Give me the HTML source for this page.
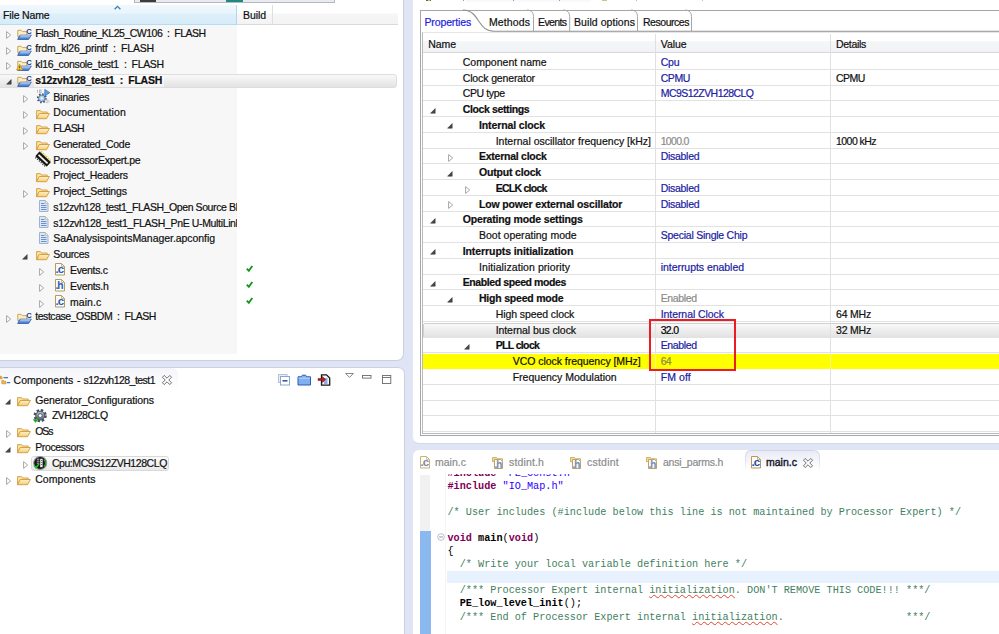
<!DOCTYPE html>
<html><head><meta charset="utf-8"><title>IDE</title>
<style>
html,body{margin:0;padding:0}
body{width:999px;height:634px;overflow:hidden;background:#e0e5f5;position:relative;font-family:"Liberation Sans", sans-serif;font-size:10.5px;color:#101010}
.t{position:absolute;white-space:pre;line-height:14px;height:14px;-webkit-text-stroke:.2px}
.i{position:absolute;overflow:visible}
.p{position:absolute;background:#fff}
.gl{position:absolute;left:423px;right:0;height:1px;background:#e2e2e2}
.cl{position:absolute;left:447.5px;white-space:pre;font-family:"Liberation Mono", monospace;font-size:10.2px;line-height:13px;height:13px;color:#000}
.cl b{font-weight:bold}
.k{color:#7f0055} .s{color:#2a00ff} .c{color:#3f7f5f}
.cl u{text-decoration:underline wavy #e2452c .45px;text-underline-offset:1.2px}
</style></head><body>

<svg width="0" height="0" style="position:absolute"><defs><linearGradient id="fg" x1="0" y1="0" x2="0" y2="1"><stop offset="0" stop-color="#fef3cc"/><stop offset="1" stop-color="#f7cc72"/></linearGradient><linearGradient id="pg" x1="0" y1="0" x2="0" y2="1"><stop offset="0" stop-color="#a9cbf5"/><stop offset="1" stop-color="#3d74cc"/></linearGradient><linearGradient id="gg" x1="0" y1="0" x2="0" y2="1"><stop offset="0" stop-color="#b4bcc8"/><stop offset="1" stop-color="#5b6574"/></linearGradient></defs></svg>
<!-- ===== project explorer panel ===== -->
<div class="p" style="left:0;top:0;width:403px;height:360px;border-right:1px solid #cacee1;border-bottom:1px solid #cacee1;border-bottom-right-radius:7px"></div>
<div style="position:absolute;left:134px;top:0;width:199px;height:1.5px;background:#e9eaf0;border:1px solid #b4b7c4;border-top:0"></div>
<div style="position:absolute;left:140px;top:0;width:16px;height:1.5px;background:#3c3c3c"></div>
<div style="position:absolute;left:226px;top:0;width:17px;height:1.5px;background:#1e8a82"></div>
<div style="position:absolute;left:0;top:25px;width:237px;height:329px;background:#f7f7f7"></div>
<div style="position:absolute;left:0;top:4.5px;width:237px;height:20px;background:linear-gradient(#f1f8fd 0,#e9f4fc 40%,#dceffa 50%,#d7ecf9 100%);border-right:1px solid #add9f0;border-bottom:1px solid #b6dcf2;box-sizing:border-box"></div>
<div style="position:absolute;left:237px;top:4.5px;width:161px;height:20px;background:linear-gradient(#fff 0,#fff 40%,#f6f6f7 50%,#f3f3f4 100%);border-bottom:1px solid #dadadc;box-sizing:border-box"></div>
<div style="position:absolute;left:271.5px;top:5px;width:1px;height:19px;background:#dedfe2"></div>
<svg class="i" style="left:114px;top:5px" width="7" height="5"><path d="M.6 4.2l2.9-2.9 2.9 2.9" fill="none" stroke="#3c7fb1" stroke-width="1.3"/></svg>
<div style="position:absolute;left:-3px;top:73.5px;width:400px;height:14.5px;border:1px solid #dedede;border-radius:3px;background:linear-gradient(#f9f9f9,#e3e3e3);box-sizing:border-box"></div>
<div style="position:absolute;left:33.5px;top:74.5px;width:130.5px;height:12.5px;background:rgba(255,255,255,.55)"></div>
<div style="position:absolute;left:0;top:0;width:237px;height:356px;overflow:hidden">
<span class="t" style="left:35.3px;top:25.6px;letter-spacing:-0.499px;">Flash_Routine_KL25_CW106  :  FLASH</span>
<span class="t" style="left:35.3px;top:41.3px;letter-spacing:-0.193px;">frdm_kl26_printf  :  FLASH</span>
<span class="t" style="left:35.3px;top:57px;letter-spacing:-0.355px;">kl16_console_test1  :  FLASH</span>
<span class="t" style="left:35.3px;top:72.7px;letter-spacing:-0.254px;font-weight:bold;">s12zvh128_test1  :  FLASH</span>
<span class="t" style="left:53.3px;top:89.7px;letter-spacing:-0.242px;">Binaries</span>
<span class="t" style="left:53.3px;top:105.4px;letter-spacing:0.16px;">Documentation</span>
<span class="t" style="left:53.3px;top:121.2px;letter-spacing:-0.629px;">FLASH</span>
<span class="t" style="left:53.3px;top:136.9px;letter-spacing:-0.276px;">Generated_Code</span>
<span class="t" style="left:53.3px;top:152.7px;letter-spacing:-0.29px;">ProcessorExpert.pe</span>
<span class="t" style="left:53.3px;top:168.4px;letter-spacing:-0.255px;">Project_Headers</span>
<span class="t" style="left:53.3px;top:184.2px;letter-spacing:-0.192px;">Project_Settings</span>
<span class="t" style="left:53.3px;top:199.9px;letter-spacing:-0.415px;">s12zvh128_test1_FLASH_Open Source BDM</span>
<span class="t" style="left:53.3px;top:215.7px;letter-spacing:-0.351px;">s12zvh128_test1_FLASH_PnE U-MultiLink</span>
<span class="t" style="left:53.3px;top:231.4px;letter-spacing:-0.054px;">SaAnalysispointsManager.apconfig</span>
<span class="t" style="left:53.3px;top:247.2px;letter-spacing:-0.404px;">Sources</span>
<span class="t" style="left:70px;top:263px;letter-spacing:-0.335px;">Events.c</span>
<span class="t" style="left:70px;top:278.7px;letter-spacing:-0.295px;">Events.h</span>
<span class="t" style="left:70px;top:294.5px;letter-spacing:0.06px;">main.c</span>
<span class="t" style="left:35.3px;top:309.4px;letter-spacing:-0.466px;">testcase_OSBDM  :  FLASH</span>
</div>
<svg class="i" style="left:6.2px;top:31px" width="5" height="8" viewBox="0 0 5 8"><path d="M.6 .6v6.8l4.1-3.4z" fill="#fff" stroke="#9c9c9c" stroke-width=".9"/></svg>
<svg class="i" style="left:16.5px;top:26px" width="15" height="14" viewBox="0 0 15 14"><path d="M.8 4.3h3.4l1.1 1.3h4.5v5H.8z" fill="#fbefc0" stroke="#c69c4c" stroke-width=".9" stroke-linejoin="round"/><path d="M3 9.2h11.3l-2.8 4.2H.7z" fill="url(#pg)" stroke="#2d5cb0" stroke-width=".9" stroke-linejoin="round"/><path d="M3.4 9.8h10" stroke="#dbe9fb" stroke-width=".7"/><text x="9.2" y="8" font-family="Liberation Sans, sans-serif" font-weight="bold" font-size="7.6" fill="#1b3a8c">C</text></svg>
<svg class="i" style="left:6.2px;top:46.7px" width="5" height="8" viewBox="0 0 5 8"><path d="M.6 .6v6.8l4.1-3.4z" fill="#fff" stroke="#9c9c9c" stroke-width=".9"/></svg>
<svg class="i" style="left:16.5px;top:41.7px" width="15" height="14" viewBox="0 0 15 14"><path d="M.8 4.3h3.4l1.1 1.3h4.5v5H.8z" fill="#fbefc0" stroke="#c69c4c" stroke-width=".9" stroke-linejoin="round"/><path d="M3 9.2h11.3l-2.8 4.2H.7z" fill="url(#pg)" stroke="#2d5cb0" stroke-width=".9" stroke-linejoin="round"/><path d="M3.4 9.8h10" stroke="#dbe9fb" stroke-width=".7"/><text x="9.2" y="8" font-family="Liberation Sans, sans-serif" font-weight="bold" font-size="7.6" fill="#1b3a8c">C</text></svg>
<svg class="i" style="left:6.2px;top:62.400000000000006px" width="5" height="8" viewBox="0 0 5 8"><path d="M.6 .6v6.8l4.1-3.4z" fill="#fff" stroke="#9c9c9c" stroke-width=".9"/></svg>
<svg class="i" style="left:16.5px;top:57.400000000000006px" width="15" height="14" viewBox="0 0 15 14"><path d="M.8 4.3h3.4l1.1 1.3h4.5v5H.8z" fill="#fbefc0" stroke="#c69c4c" stroke-width=".9" stroke-linejoin="round"/><path d="M3 9.2h11.3l-2.8 4.2H.7z" fill="url(#pg)" stroke="#2d5cb0" stroke-width=".9" stroke-linejoin="round"/><path d="M3.4 9.8h10" stroke="#dbe9fb" stroke-width=".7"/><text x="9.2" y="8" font-family="Liberation Sans, sans-serif" font-weight="bold" font-size="7.6" fill="#1b3a8c">C</text><path d="M2.6 7.3l3 5.7h-6z" fill="#f7c83a" stroke="#b8860b" stroke-width=".7" stroke-linejoin="round"/><path d="M2.6 9.2v2M2.6 11.8v.6" stroke="#5a3c00" stroke-width=".8"/></svg>
<svg class="i" style="left:5.7px;top:79.3px" width="6" height="6" viewBox="0 0 6 6"><path d="M5.2 .6v4.6h-4.6z" fill="#484848" stroke="#2c2c2c" stroke-width=".5"/></svg>
<svg class="i" style="left:16.5px;top:73.1px" width="15" height="14" viewBox="0 0 15 14"><path d="M.8 4.3h3.4l1.1 1.3h4.5v5H.8z" fill="#fbefc0" stroke="#c69c4c" stroke-width=".9" stroke-linejoin="round"/><path d="M3 9.2h11.3l-2.8 4.2H.7z" fill="url(#pg)" stroke="#2d5cb0" stroke-width=".9" stroke-linejoin="round"/><path d="M3.4 9.8h10" stroke="#dbe9fb" stroke-width=".7"/><text x="9.2" y="8" font-family="Liberation Sans, sans-serif" font-weight="bold" font-size="7.6" fill="#1b3a8c">C</text></svg>
<svg class="i" style="left:22.7px;top:95.1px" width="5" height="8" viewBox="0 0 5 8"><path d="M.6 .6v6.8l4.1-3.4z" fill="#fff" stroke="#9c9c9c" stroke-width=".9"/></svg>
<svg class="i" style="left:36px;top:89.1px" width="14.5" height="14.5" viewBox="0 0 14.5 14.5"><circle cx="5.8" cy="9.3" r="3.9" fill="none" stroke="#3d4f6c" stroke-width="2.2" stroke-dasharray="1.4 1.66"/><circle cx="5.8" cy="9.3" r="3.3" fill="#a9d0f2" stroke="#4d6284" stroke-width=".8"/><circle cx="5.8" cy="9.3" r="1.2" fill="#eaf4fc"/><path d="M8.8 .4l5 3.3-5 3.3z" fill="#5f9fe6" stroke="#2f6bc0" stroke-width=".7" stroke-linejoin="round"/><path d="M1.5 .8v3M3.5 .9h1.6v2.8h-1.6z" stroke="#9aa3b2" stroke-width=".7" fill="none"/><path d="M13 10.8v3M10 10.9h1.6v2.8h-1.6z" stroke="#b4bbc8" stroke-width=".7" fill="none"/></svg>
<svg class="i" style="left:22.7px;top:110.85px" width="5" height="8" viewBox="0 0 5 8"><path d="M.6 .6v6.8l4.1-3.4z" fill="#fff" stroke="#9c9c9c" stroke-width=".9"/></svg>
<svg class="i" style="left:36.1px;top:108.64999999999999px" width="14" height="11" viewBox="0 0 14 11"><path d="M.6 1.6h3.8l1.2 1.4h5.6v2H3.2L.6 9.6z" fill="#fbe4a0" stroke="#d29a3c" stroke-width=".9" stroke-linejoin="round"/><path d="M3.2 4.5h10.2l-2.9 5.2H.6z" fill="url(#fg)" stroke="#d29a3c" stroke-width=".9" stroke-linejoin="round"/></svg>
<svg class="i" style="left:22.7px;top:126.6px" width="5" height="8" viewBox="0 0 5 8"><path d="M.6 .6v6.8l4.1-3.4z" fill="#fff" stroke="#9c9c9c" stroke-width=".9"/></svg>
<svg class="i" style="left:36.1px;top:124.39999999999999px" width="14" height="11" viewBox="0 0 14 11"><path d="M.6 1.6h3.8l1.2 1.4h5.6v2H3.2L.6 9.6z" fill="#fbe4a0" stroke="#d29a3c" stroke-width=".9" stroke-linejoin="round"/><path d="M3.2 4.5h10.2l-2.9 5.2H.6z" fill="url(#fg)" stroke="#d29a3c" stroke-width=".9" stroke-linejoin="round"/></svg>
<svg class="i" style="left:22.7px;top:142.35px" width="5" height="8" viewBox="0 0 5 8"><path d="M.6 .6v6.8l4.1-3.4z" fill="#fff" stroke="#9c9c9c" stroke-width=".9"/></svg>
<svg class="i" style="left:36.1px;top:140.15px" width="14" height="11" viewBox="0 0 14 11"><path d="M.6 1.6h3.8l1.2 1.4h5.6v2H3.2L.6 9.6z" fill="#fbe4a0" stroke="#d29a3c" stroke-width=".9" stroke-linejoin="round"/><path d="M3.2 4.5h10.2l-2.9 5.2H.6z" fill="url(#fg)" stroke="#d29a3c" stroke-width=".9" stroke-linejoin="round"/></svg>
<svg class="i" style="left:36px;top:152.1px" width="14.5" height="14" viewBox="0 0 14.5 14"><g transform="rotate(-47 7.2 7)"><rect x="3.9" y="-.8" width="6.4" height="15.6" rx=".6" fill="#161616"/><rect x="6.1" y=".8" width="1.8" height="12.4" fill="#f2f2f2"/><path d="M10.3 .8h1.5M10.3 3.2h1.5M10.3 5.6h1.5M10.3 8h1.5M10.3 10.4h1.5M10.3 12.8h1.5" stroke="#d8c21e" stroke-width="1.3"/><path d="M2.4 .8h1.5M2.4 3.2h1.5M2.4 5.6h1.5M2.4 8h1.5M2.4 10.4h1.5M2.4 12.8h1.5" stroke="#3a3a3a" stroke-width="1.1"/></g></svg>
<svg class="i" style="left:36.1px;top:171.65px" width="14" height="11" viewBox="0 0 14 11"><path d="M.6 1.6h3.8l1.2 1.4h5.6v2H3.2L.6 9.6z" fill="#fbe4a0" stroke="#d29a3c" stroke-width=".9" stroke-linejoin="round"/><path d="M3.2 4.5h10.2l-2.9 5.2H.6z" fill="url(#fg)" stroke="#d29a3c" stroke-width=".9" stroke-linejoin="round"/></svg>
<svg class="i" style="left:22.7px;top:189.6px" width="5" height="8" viewBox="0 0 5 8"><path d="M.6 .6v6.8l4.1-3.4z" fill="#fff" stroke="#9c9c9c" stroke-width=".9"/></svg>
<svg class="i" style="left:36.1px;top:187.4px" width="14" height="11" viewBox="0 0 14 11"><path d="M.6 1.6h3.8l1.2 1.4h5.6v2H3.2L.6 9.6z" fill="#fbe4a0" stroke="#d29a3c" stroke-width=".9" stroke-linejoin="round"/><path d="M3.2 4.5h10.2l-2.9 5.2H.6z" fill="url(#fg)" stroke="#d29a3c" stroke-width=".9" stroke-linejoin="round"/></svg>
<svg class="i" style="left:38.5px;top:200.35px" width="10" height="12" viewBox="0 0 10 12"><path d="M.5 .5h5.8l2.7 2.7v8.3h-8.5z" fill="#dce7f6" stroke="#9fb3d1" stroke-width="1"/><path d="M6.3 .5v2.7h2.7" fill="#f4f7fc" stroke="#c4a86a" stroke-width=".7"/><path d="M2 3.5h3.5M2 5.5h5.5M2 7.5h5.5M2 9.5h5.5" stroke="#5f88c9" stroke-width=".9"/></svg>
<svg class="i" style="left:38.5px;top:216.1px" width="10" height="12" viewBox="0 0 10 12"><path d="M.5 .5h5.8l2.7 2.7v8.3h-8.5z" fill="#dce7f6" stroke="#9fb3d1" stroke-width="1"/><path d="M6.3 .5v2.7h2.7" fill="#f4f7fc" stroke="#c4a86a" stroke-width=".7"/><path d="M2 3.5h3.5M2 5.5h5.5M2 7.5h5.5M2 9.5h5.5" stroke="#5f88c9" stroke-width=".9"/></svg>
<svg class="i" style="left:38.5px;top:231.85px" width="10" height="12" viewBox="0 0 10 12"><path d="M.5 .5h5.8l2.7 2.7v8.3h-8.5z" fill="#dce7f6" stroke="#9fb3d1" stroke-width="1"/><path d="M6.3 .5v2.7h2.7" fill="#f4f7fc" stroke="#c4a86a" stroke-width=".7"/><path d="M2 3.5h3.5M2 5.5h5.5M2 7.5h5.5M2 9.5h5.5" stroke="#5f88c9" stroke-width=".9"/></svg>
<svg class="i" style="left:22.2px;top:253.79999999999998px" width="6" height="6" viewBox="0 0 6 6"><path d="M5.2 .6v4.6h-4.6z" fill="#484848" stroke="#2c2c2c" stroke-width=".5"/></svg>
<svg class="i" style="left:36.1px;top:250.4px" width="14" height="11" viewBox="0 0 14 11"><path d="M.6 1.6h3.8l1.2 1.4h5.6v2H3.2L.6 9.6z" fill="#fbe4a0" stroke="#d29a3c" stroke-width=".9" stroke-linejoin="round"/><path d="M3.2 4.5h10.2l-2.9 5.2H.6z" fill="url(#fg)" stroke="#d29a3c" stroke-width=".9" stroke-linejoin="round"/></svg>
<svg class="i" style="left:39px;top:268.35px" width="5" height="8" viewBox="0 0 5 8"><path d="M.6 .6v6.8l4.1-3.4z" fill="#fff" stroke="#9c9c9c" stroke-width=".9"/></svg>
<svg class="i" style="left:54.9px;top:263.35px" width="10" height="12.5" viewBox="0 0 10 12.5"><path d="M.5 .5h6l3 3v8.5h-9z" fill="#fcfcfa" stroke="#b39b62" stroke-width="1"/><path d="M6.5 .5v3h3" fill="none" stroke="#b39b62" stroke-width=".7"/><text x=".6" y="9.8" font-family="Liberation Sans, sans-serif" font-weight="bold" font-size="11.5" letter-spacing="-1.1" fill="#2a5db0">.c</text></svg>
<svg class="i" style="left:246.4px;top:265.45000000000005px" width="7" height="7" viewBox="0 0 7 7"><path d="M.8 3.6l2 2.2 3.5-4.8" fill="none" stroke="#12961a" stroke-width="1.8"/></svg>
<svg class="i" style="left:39px;top:284.1px" width="5" height="8" viewBox="0 0 5 8"><path d="M.6 .6v6.8l4.1-3.4z" fill="#fff" stroke="#9c9c9c" stroke-width=".9"/></svg>
<svg class="i" style="left:54.9px;top:279.1px" width="10" height="12.5" viewBox="0 0 10 12.5"><path d="M.5 .5h6l3 3v8.5h-9z" fill="#fcfcfa" stroke="#b39b62" stroke-width="1"/><path d="M6.5 .5v3h3" fill="none" stroke="#b39b62" stroke-width=".7"/><text x=".6" y="9.8" font-family="Liberation Sans, sans-serif" font-weight="bold" font-size="10.3" letter-spacing="-1.1" fill="#2a5db0">.h</text></svg>
<svg class="i" style="left:246.4px;top:281.20000000000005px" width="7" height="7" viewBox="0 0 7 7"><path d="M.8 3.6l2 2.2 3.5-4.8" fill="none" stroke="#12961a" stroke-width="1.8"/></svg>
<svg class="i" style="left:39px;top:299.85px" width="5" height="8" viewBox="0 0 5 8"><path d="M.6 .6v6.8l4.1-3.4z" fill="#fff" stroke="#9c9c9c" stroke-width=".9"/></svg>
<svg class="i" style="left:54.9px;top:294.85px" width="10" height="12.5" viewBox="0 0 10 12.5"><path d="M.5 .5h6l3 3v8.5h-9z" fill="#fcfcfa" stroke="#b39b62" stroke-width="1"/><path d="M6.5 .5v3h3" fill="none" stroke="#b39b62" stroke-width=".7"/><text x=".6" y="9.8" font-family="Liberation Sans, sans-serif" font-weight="bold" font-size="11.5" letter-spacing="-1.1" fill="#2a5db0">.c</text></svg>
<svg class="i" style="left:246.4px;top:296.95000000000005px" width="7" height="7" viewBox="0 0 7 7"><path d="M.8 3.6l2 2.2 3.5-4.8" fill="none" stroke="#12961a" stroke-width="1.8"/></svg>
<svg class="i" style="left:6.2px;top:314.8px" width="5" height="8" viewBox="0 0 5 8"><path d="M.6 .6v6.8l4.1-3.4z" fill="#fff" stroke="#9c9c9c" stroke-width=".9"/></svg>
<svg class="i" style="left:16.5px;top:309.8px" width="15" height="14" viewBox="0 0 15 14"><path d="M.8 4.3h3.4l1.1 1.3h4.5v5H.8z" fill="#fbefc0" stroke="#c69c4c" stroke-width=".9" stroke-linejoin="round"/><path d="M3 9.2h11.3l-2.8 4.2H.7z" fill="url(#pg)" stroke="#2d5cb0" stroke-width=".9" stroke-linejoin="round"/><path d="M3.4 9.8h10" stroke="#dbe9fb" stroke-width=".7"/><text x="9.2" y="8" font-family="Liberation Sans, sans-serif" font-weight="bold" font-size="7.6" fill="#1b3a8c">C</text></svg>

<!-- ===== components panel ===== -->
<div class="p" style="left:-1px;top:367px;width:404px;height:280px;border-top-right-radius:7px;border:1px solid #ccd0e3"></div>
<div style="position:absolute;left:-4px;top:368px;width:182px;height:22px;border-radius:0 6px 0 0;background:linear-gradient(#f4f5fa,#fbfbfd 60%,#fff)"></div>
<svg class="i" style="left:0;top:375px" width="11" height="10"><path d="M3.5 2.6h4.5M7 7.6h3.2" stroke="#3f7ac2" stroke-width="1.2"/><path d="M0 1.2h1.3l.8.8v1.8h-2.1zM1.8 5.6h2.2l.8.8h1.2v2.4h-4.2z" fill="#eeb44a" stroke="#c78a24" stroke-width=".6"/></svg>
<svg class="i" style="left:162.3px;top:375px" width="10" height="10"><path d="M7.79 0.44L9.56 2.21L6.77 5.00L9.56 7.79L7.79 9.56L5.00 6.77L2.21 9.56L0.44 7.79L3.23 5.00L0.44 2.21L2.21 0.44L5.00 3.23z" fill="#fff" stroke="#5e5e5e" stroke-width=".9" stroke-linejoin="round"/></svg>
<!-- toolbar -->
<svg class="i" style="left:278px;top:373.5px" width="13" height="12"><rect x=".5" y=".5" width="8.5" height="8" fill="#e6edf8" stroke="#b5c3da"/><rect x="2.5" y="2.5" width="9" height="8.5" fill="#fff" stroke="#8fa6cc"/><path d="M4.5 6.8h5" stroke="#2a4f9a" stroke-width="1.5"/></svg>
<svg class="i" style="left:297px;top:373.5px" width="15" height="12"><path d="M1 2.8h3.2l1.2-1.6h3.2l1.2 1.6h3.7v8.2h-12.5z" fill="#7fb0f0" stroke="#2f58b8" stroke-width="1"/><path d="M1.5 4.2h11.5" stroke="#cfe1fa" stroke-width=".8"/></svg>
<svg class="i" style="left:317.5px;top:373.5px" width="13" height="12"><path d="M3.5 .8h5l3.2 3.2v7.2h-8.2z" fill="#f4f6fb" stroke="#1a1a1a" stroke-width="1.3"/><path d="M6 5h3.5M6 7h3.5M6 9h3.5" stroke="#3a5fd0" stroke-width="1"/><path d="M0 4.5h4.5v-2l3 3-3 3v-2h-4.5z" fill="#c0181a" stroke="#7a0c0e" stroke-width=".5"/></svg>
<svg class="i" style="left:345px;top:373px" width="9" height="5"><path d="M.6 .5h7.8l-3.9 3.9z" fill="#fff" stroke="#6b6b6b" stroke-width=".8"/></svg>
<svg class="i" style="left:362px;top:374.5px" width="10" height="4"><rect x=".5" y=".5" width="8.5" height="2.6" fill="#fff" stroke="#6b6b6b" stroke-width=".9"/></svg>
<svg class="i" style="left:382px;top:374.8px" width="10" height="10"><rect x=".5" y=".5" width="8.3" height="8" fill="#fff" stroke="#6b6b6b" stroke-width=".9"/><path d="M.5 2.5h8.3" stroke="#6b6b6b" stroke-width=".9"/></svg>
<div style="position:absolute;left:31px;top:455.5px;width:137.5px;height:15.5px;border:1px solid #d9d9d9;border-radius:3px;background:linear-gradient(#fbfbfb,#e9e9e9);box-sizing:border-box"></div>
<svg class="i" style="left:5.3px;top:399.2px" width="6" height="6" viewBox="0 0 6 6"><path d="M5.2 .6v4.6h-4.6z" fill="#484848" stroke="#2c2c2c" stroke-width=".5"/></svg>
<svg class="i" style="left:16.8px;top:395.8px" width="14" height="11" viewBox="0 0 14 11"><path d="M.6 1.6h3.8l1.2 1.4h5.6v2H3.2L.6 9.6z" fill="#fbe4a0" stroke="#d29a3c" stroke-width=".9" stroke-linejoin="round"/><path d="M3.2 4.5h10.2l-2.9 5.2H.6z" fill="url(#fg)" stroke="#d29a3c" stroke-width=".9" stroke-linejoin="round"/></svg>
<svg class="i" style="left:32.8px;top:408.8px" width="15" height="14" viewBox="0 0 15 14"><circle cx="7.2" cy="6.6" r="5.3" fill="none" stroke="#454f5e" stroke-width="2.6" stroke-dasharray="2.3 1.863"/><circle cx="7.2" cy="6.6" r="4.5" fill="url(#gg)" stroke="#454f5e" stroke-width="1"/><circle cx="7.2" cy="6.6" r="1.9" fill="#fff" stroke="#454f5e" stroke-width=".8"/><path d="M.6 10.3l2 2.2 3-3.8" fill="none" stroke="#22a022" stroke-width="1.6"/></svg>
<svg class="i" style="left:5.8px;top:429.5px" width="5" height="8" viewBox="0 0 5 8"><path d="M.6 .6v6.8l4.1-3.4z" fill="#fff" stroke="#9c9c9c" stroke-width=".9"/></svg>
<svg class="i" style="left:16.8px;top:427.3px" width="14" height="11" viewBox="0 0 14 11"><path d="M.6 1.6h3.8l1.2 1.4h5.6v2H3.2L.6 9.6z" fill="#fbe4a0" stroke="#d29a3c" stroke-width=".9" stroke-linejoin="round"/><path d="M3.2 4.5h10.2l-2.9 5.2H.6z" fill="url(#fg)" stroke="#d29a3c" stroke-width=".9" stroke-linejoin="round"/></svg>
<svg class="i" style="left:5.3px;top:446.5px" width="6" height="6" viewBox="0 0 6 6"><path d="M5.2 .6v4.6h-4.6z" fill="#484848" stroke="#2c2c2c" stroke-width=".5"/></svg>
<svg class="i" style="left:16.8px;top:443.1px" width="14" height="11" viewBox="0 0 14 11"><path d="M.6 1.6h3.8l1.2 1.4h5.6v2H3.2L.6 9.6z" fill="#fbe4a0" stroke="#d29a3c" stroke-width=".9" stroke-linejoin="round"/><path d="M3.2 4.5h10.2l-2.9 5.2H.6z" fill="url(#fg)" stroke="#d29a3c" stroke-width=".9" stroke-linejoin="round"/></svg>
<svg class="i" style="left:23px;top:461px" width="5" height="8" viewBox="0 0 5 8"><path d="M.6 .6v6.8l4.1-3.4z" fill="#fff" stroke="#9c9c9c" stroke-width=".9"/></svg>
<svg class="i" style="left:32.8px;top:456px" width="15" height="14" viewBox="0 0 15 14"><circle cx="7.2" cy="7" r="6.5" fill="#161616" stroke="#9a9a9a" stroke-width="1.1"/><path d="M3.8 3.2h2.6M3.8 5.2h2.6M3.8 7.2h2.6" stroke="#cfcfcf" stroke-width=".9"/><rect x="7.2" y="2.8" width="2.4" height="8.4" fill="#f6f6f6"/><path d="M7.9 4.5h1.2M7.9 6.5h1.2M7.9 8.5h1.2" stroke="#333" stroke-width=".7"/><path d="M11 3.5a5 5 0 0 1 0 7" fill="none" stroke="#2aa62a" stroke-width="1.3"/><path d="M1 9.4l2 2.3 3-3.8" fill="none" stroke="#2ec02e" stroke-width="1.6"/></svg>
<svg class="i" style="left:5.8px;top:477px" width="5" height="8" viewBox="0 0 5 8"><path d="M.6 .6v6.8l4.1-3.4z" fill="#fff" stroke="#9c9c9c" stroke-width=".9"/></svg>
<svg class="i" style="left:16.8px;top:474.8px" width="14" height="11" viewBox="0 0 14 11"><path d="M.6 1.6h3.8l1.2 1.4h5.6v2H3.2L.6 9.6z" fill="#fbe4a0" stroke="#d29a3c" stroke-width=".9" stroke-linejoin="round"/><path d="M3.2 4.5h10.2l-2.9 5.2H.6z" fill="url(#fg)" stroke="#d29a3c" stroke-width=".9" stroke-linejoin="round"/></svg>

<!-- ===== properties panel ===== -->
<div class="p" style="left:412px;top:-1px;width:600px;height:442.5px;border-bottom-left-radius:7px;border:1px solid #d3d7e7;border-left-color:#e4e7f4"></div>
<div style="position:absolute;left:466px;top:0;width:125px;height:1.5px;background:#f7f9fd"></div>
<div style="position:absolute;left:425.5px;top:0;width:5.5px;height:1px;background:#6a6448"></div>
<div style="position:absolute;left:428px;top:0;width:2px;height:1px;background:#d8c850"></div>
<div style="position:absolute;left:463px;top:0;width:1px;height:1px;background:#b98aa8"></div>
<div style="position:absolute;left:512.5px;top:0;width:1px;height:1px;background:#b98aa8"></div>
<div style="position:absolute;left:559px;top:0;width:1px;height:1px;background:#b98aa8"></div>
<div style="position:absolute;left:602px;top:0;width:5px;height:1px;background:#cfc47a"></div>
<div style="position:absolute;left:635.5px;top:0;width:1px;height:1px;background:#bdbdbd"></div>
<div style="position:absolute;left:702px;top:0;width:1px;height:1px;background:#bdbdbd"></div>
<div style="position:absolute;left:419.5px;top:9.5px;width:600px;height:426px;border:1px solid #a6a6a6;box-sizing:border-box"></div>
<svg class="i" style="left:420px;top:9px" width="600" height="24">
<path d="M43 1c9 .3 12.5 6 16 11.5s7 9.7 15 9.8H600" fill="none" stroke="#8f8f8f" stroke-width="1.1"/>
<path d="M107 1c4.5 .3 6.3 2.5 6.5 6.5v14.5M143.2 1c4.5 .3 6.3 2.5 6.5 6.5v14.5M211 1c4.5 .3 6.3 2.5 6.5 6.5v14.5M265 1c4.5 .3 6.3 2.5 6.5 6.5v14.5" fill="none" stroke="#a6a6a6" stroke-width="1"/>
</svg>
<!-- table -->
<div style="position:absolute;left:421.5px;top:32px;width:600px;height:401.5px;border:1px solid #b9b9b9;border-top-color:#e6e6e6;box-sizing:border-box;background:#fff"></div>
<div style="position:absolute;left:422.5px;top:33.5px;width:600px;height:19.5px;background:linear-gradient(#fff 0,#fff 38%,#f5f6f8 42%,#f1f2f5 100%);border-bottom:1px solid #d8d8d8;box-sizing:border-box"></div>
<div style="position:absolute;left:423px;top:322.7px;width:600px;height:15px;border:1px solid #d0d0d0;border-radius:2px;background:linear-gradient(#f8f8f8,#e3e3e3);box-sizing:border-box"></div>
<div class="gl" style="top:68.86px"></div>
<div class="gl" style="top:84.61px"></div>
<div class="gl" style="top:100.37px"></div>
<div class="gl" style="top:116.12px"></div>
<div class="gl" style="top:131.88px"></div>
<div class="gl" style="top:147.63px"></div>
<div class="gl" style="top:163.39px"></div>
<div class="gl" style="top:179.14px"></div>
<div class="gl" style="top:194.9px"></div>
<div class="gl" style="top:210.65px"></div>
<div class="gl" style="top:226.41px"></div>
<div class="gl" style="top:242.16px"></div>
<div class="gl" style="top:257.92px"></div>
<div class="gl" style="top:273.67px"></div>
<div class="gl" style="top:289.43px"></div>
<div class="gl" style="top:305.18px"></div>
<div class="gl" style="top:320.94px"></div>
<div class="gl" style="top:336.69px"></div>
<div class="gl" style="top:352.45px"></div>
<div class="gl" style="top:368.2px"></div>
<div class="gl" style="top:383.96px"></div>
<div class="gl" style="top:399.71px"></div>
<div class="gl" style="top:415.47px"></div>
<div class="gl" style="top:431.22px"></div>
<div style="position:absolute;left:655px;top:34px;width:1px;height:399px;background:#e0e0e0"></div>
<div style="position:absolute;left:830px;top:34px;width:1px;height:399px;background:#e0e0e0"></div>
<div style="position:absolute;left:423px;top:353.5px;width:600px;height:15.5px;background:#ffff00"></div>
<div style="position:absolute;left:655px;top:353.5px;width:1px;height:15.5px;background:#f6f68c"></div>
<div style="position:absolute;left:830px;top:353.5px;width:1px;height:15.5px;background:#f6f68c"></div>
<svg class="i" style="left:429.5px;top:107.665px" width="6" height="6" viewBox="0 0 6 6"><path d="M5.2 .6v4.6h-4.6z" fill="#484848" stroke="#2c2c2c" stroke-width=".5"/></svg>
<svg class="i" style="left:446.8px;top:123.42px" width="6" height="6" viewBox="0 0 6 6"><path d="M5.2 .6v4.6h-4.6z" fill="#484848" stroke="#2c2c2c" stroke-width=".5"/></svg>
<svg class="i" style="left:447.7px;top:154.23000000000002px" width="5" height="8" viewBox="0 0 5 8"><path d="M.6 .6v6.8l4.1-3.4z" fill="#fff" stroke="#9c9c9c" stroke-width=".9"/></svg>
<svg class="i" style="left:446.8px;top:170.685px" width="6" height="6" viewBox="0 0 6 6"><path d="M5.2 .6v4.6h-4.6z" fill="#484848" stroke="#2c2c2c" stroke-width=".5"/></svg>
<svg class="i" style="left:464.7px;top:185.74px" width="5" height="8" viewBox="0 0 5 8"><path d="M.6 .6v6.8l4.1-3.4z" fill="#fff" stroke="#9c9c9c" stroke-width=".9"/></svg>
<svg class="i" style="left:447.7px;top:201.495px" width="5" height="8" viewBox="0 0 5 8"><path d="M.6 .6v6.8l4.1-3.4z" fill="#fff" stroke="#9c9c9c" stroke-width=".9"/></svg>
<svg class="i" style="left:429.5px;top:217.95px" width="6" height="6" viewBox="0 0 6 6"><path d="M5.2 .6v4.6h-4.6z" fill="#484848" stroke="#2c2c2c" stroke-width=".5"/></svg>
<svg class="i" style="left:429.5px;top:249.45999999999998px" width="6" height="6" viewBox="0 0 6 6"><path d="M5.2 .6v4.6h-4.6z" fill="#484848" stroke="#2c2c2c" stroke-width=".5"/></svg>
<svg class="i" style="left:429.5px;top:280.97px" width="6" height="6" viewBox="0 0 6 6"><path d="M5.2 .6v4.6h-4.6z" fill="#484848" stroke="#2c2c2c" stroke-width=".5"/></svg>
<svg class="i" style="left:446.8px;top:296.725px" width="6" height="6" viewBox="0 0 6 6"><path d="M5.2 .6v4.6h-4.6z" fill="#484848" stroke="#2c2c2c" stroke-width=".5"/></svg>
<svg class="i" style="left:463.8px;top:343.99px" width="6" height="6" viewBox="0 0 6 6"><path d="M5.2 .6v4.6h-4.6z" fill="#484848" stroke="#2c2c2c" stroke-width=".5"/></svg>
<div style="position:absolute;left:648.5px;top:319.1px;width:87.8px;height:52px;border:2px solid #ec1c24;box-sizing:border-box"></div>

<!-- ===== editor panel ===== -->
<div class="p" style="left:413px;top:450px;width:600px;height:200px;border-top-left-radius:6px"></div>
<div style="position:absolute;left:745px;top:450px;width:74.5px;height:21.5px;border-radius:6px 6px 0 0;background:linear-gradient(#d0d4e6,#dfe2ee 50%,#fff 95%)"></div>
<div style="position:absolute;left:746px;top:451px;width:72.5px;height:20.5px;border-radius:5px 5px 0 0;background:linear-gradient(#eaecf6,#f6f7fb 50%,#fff 90%)"></div>
<div style="position:absolute;left:419.7px;top:475px;width:10.3px;height:160px;background:#f1f1f1"></div>
<div style="position:absolute;left:419.5px;top:530.5px;width:11px;height:110px;background:#8bb9ef"></div>
<div style="position:absolute;left:445.3px;top:473px;width:1px;height:170px;background:#f4f4f4"></div>
<div style="position:absolute;left:447px;top:570.5px;width:600px;height:12.5px;background:#e8f2fe"></div>
<svg class="i" style="left:437.2px;top:532.8px" width="8" height="8"><circle cx="4" cy="4" r="3.3" fill="#fff" stroke="#a3adc0" stroke-width=".8"/><path d="M2.2 4h3.6" stroke="#7a8599" stroke-width=".9"/></svg>
<div style="position:absolute;left:447.5px;top:473.9px;width:135px;height:6px;overflow:hidden"><div class="cl" style="left:0;top:-7.1px"><b class="k">#include</b> <span class="s">"PE_Const.h"</span></div></div>
<div class="cl" style="top:479.9px"><b class="k">#include</b> <span class="s">"IO_Map.h"</span></div>
<div class="cl" style="top:505.6px"><span class="c">/* User includes (#include below this line is not maintained by Processor Expert) */</span></div>
<div class="cl" style="top:531.8px"><b class="k">void</b> <b>main</b>(<b class="k">void</b>)</div>
<div class="cl" style="top:544.9px">{</div>
<div class="cl" style="top:558px"><span class="c">  /* Write your local variable definition here */</span></div>
<div class="cl" style="top:584.3px"><span class="c">  /*** Processor Expert internal <u>initialization</u>. DON'T REMOVE THIS CODE!!! ***/</span></div>
<div class="cl" style="top:597.4px">  <b>PE_low_level_init</b>();</div>
<div class="cl" style="top:610.5px"><span class="c">  /*** End of Processor Expert internal <u>initialization</u>.                    ***/</span></div>
<svg class="i" style="left:420px;top:455.7px" width="10" height="12.5" viewBox="0 0 10 12.5"><path d="M.5 .5h6l3 3v8.5h-9z" fill="#fcfcfa" stroke="#c9b37a" stroke-width="1"/><path d="M6.5 .5v3h3" fill="none" stroke="#c9b37a" stroke-width=".7"/><text x=".6" y="9.8" font-family="Liberation Sans, sans-serif" font-weight="bold" font-size="11.5" letter-spacing="-1.1" fill="#7a8aa8">.c</text></svg>
<svg class="i" style="left:492px;top:455.5px" width="12" height="13.5" viewBox="0 0 12 13.5"><path d="M.5 1.5h4l1 1.2h5v3h-10z" fill="#f3dc9a" stroke="#c9a44c" stroke-width=".8"/><path d="M2.5 3.5h6l2 2v7h-8z" fill="#fbfcfe" stroke="#b9a36a" stroke-width="1"/><text x="2.6" y="11.6" font-family="Liberation Sans, sans-serif" font-weight="bold" font-size="10" letter-spacing="-1" fill="#7a8aa8">.h</text></svg>
<svg class="i" style="left:570px;top:455.5px" width="12" height="13.5" viewBox="0 0 12 13.5"><path d="M.5 1.5h4l1 1.2h5v3h-10z" fill="#f3dc9a" stroke="#c9a44c" stroke-width=".8"/><path d="M2.5 3.5h6l2 2v7h-8z" fill="#fbfcfe" stroke="#b9a36a" stroke-width="1"/><text x="2.6" y="11.6" font-family="Liberation Sans, sans-serif" font-weight="bold" font-size="10" letter-spacing="-1" fill="#7a8aa8">.h</text></svg>
<svg class="i" style="left:646px;top:455.5px" width="12" height="13.5" viewBox="0 0 12 13.5"><path d="M.5 1.5h4l1 1.2h5v3h-10z" fill="#f3dc9a" stroke="#c9a44c" stroke-width=".8"/><path d="M2.5 3.5h6l2 2v7h-8z" fill="#fbfcfe" stroke="#b9a36a" stroke-width="1"/><text x="2.6" y="11.6" font-family="Liberation Sans, sans-serif" font-weight="bold" font-size="10" letter-spacing="-1" fill="#7a8aa8">.h</text></svg>
<svg class="i" style="left:751.3px;top:455.5px" width="10" height="12.5" viewBox="0 0 10 12.5"><path d="M.5 .5h6l3 3v8.5h-9z" fill="#fcfcfa" stroke="#b9975a" stroke-width="1"/><path d="M6.5 .5v3h3" fill="none" stroke="#b9975a" stroke-width=".7"/><text x=".6" y="9.8" font-family="Liberation Sans, sans-serif" font-weight="bold" font-size="11.5" letter-spacing="-1.1" fill="#1f4fa0">.c</text></svg>
<svg class="i" style="left:803px;top:457.5px" width="10" height="10"><path d="M7.79 0.44L9.56 2.21L6.77 5.00L9.56 7.79L7.79 9.56L5.00 6.77L2.21 9.56L0.44 7.79L3.23 5.00L0.44 2.21L2.21 0.44L5.00 3.23z" fill="#fff" stroke="#5e5e5e" stroke-width=".9" stroke-linejoin="round"/></svg>

<span class="t" style="left:3px;top:7.8px;letter-spacing:-0.151px;">File Name</span>
<span class="t" style="left:243px;top:7.8px;letter-spacing:-0.072px;">Build</span>
<span class="t" style="left:13.6px;top:373.2px;letter-spacing:0.005px;">Components</span>
<span class="t" style="left:77px;top:373.2px;letter-spacing:-0.3px;">-</span>
<span class="t" style="left:83.6px;top:373.2px;letter-spacing:-0.534px;">s12zvh128_test1</span>
<span class="t" style="left:35.2px;top:392.6px;letter-spacing:-0.089px;">Generator_Configurations</span>
<span class="t" style="left:51.9px;top:408.4px;letter-spacing:-0.49px;">ZVH128CLQ</span>
<span class="t" style="left:35.2px;top:424.1px;letter-spacing:-1.074px;">OSs</span>
<span class="t" style="left:35.2px;top:439.9px;letter-spacing:-0.382px;">Processors</span>
<span class="t" style="left:51.9px;top:455.6px;letter-spacing:-0.428px;">Cpu:MC9S12ZVH128CLQ</span>
<span class="t" style="left:35.2px;top:471.6px;letter-spacing:0.075px;">Components</span>
<span class="t" style="left:424.5px;top:14.8px;letter-spacing:-0.136px;color:#2222dd;">Properties</span>
<span class="t" style="left:489px;top:14.8px;letter-spacing:0.103px;">Methods</span>
<span class="t" style="left:538px;top:14.8px;letter-spacing:-0.602px;">Events</span>
<span class="t" style="left:574px;top:14.8px;letter-spacing:0.067px;">Build options</span>
<span class="t" style="left:643px;top:14.8px;letter-spacing:-0.467px;">Resources</span>
<span class="t" style="left:428.3px;top:36.8px;letter-spacing:-0.079px;">Name</span>
<span class="t" style="left:660.7px;top:36.8px;letter-spacing:-0.016px;">Value</span>
<span class="t" style="left:836px;top:36.8px;letter-spacing:-0.301px;">Details</span>
<span class="t" style="left:462.7px;top:54.8px;letter-spacing:0.038px;">Component name</span>
<span class="t" style="left:660.7px;top:54.8px;letter-spacing:-0.222px;color:#2020a2;">Cpu</span>
<span class="t" style="left:462.7px;top:70.6px;letter-spacing:-0.122px;">Clock generator</span>
<span class="t" style="left:660.7px;top:70.6px;letter-spacing:-0.405px;color:#2020a2;">CPMU</span>
<span class="t" style="left:836px;top:70.6px;letter-spacing:-0.555px;">CPMU</span>
<span class="t" style="left:462.7px;top:86.3px;letter-spacing:-0.367px;">CPU type</span>
<span class="t" style="left:660.7px;top:86.3px;letter-spacing:-0.545px;color:#2020a2;">MC9S12ZVH128CLQ</span>
<span class="t" style="left:462.7px;top:102.1px;letter-spacing:-0.37px;font-weight:bold;">Clock settings</span>
<span class="t" style="left:479px;top:117.8px;letter-spacing:-0.122px;font-weight:bold;">Internal clock</span>
<span class="t" style="left:495.7px;top:133.6px;letter-spacing:0.002px;">Internal oscillator frequency [kHz]</span>
<span class="t" style="left:660.7px;top:133.6px;letter-spacing:-0.688px;color:#8a8a8a;">1000.0</span>
<span class="t" style="left:836px;top:133.6px;letter-spacing:-0.545px;">1000 kHz</span>
<span class="t" style="left:479px;top:149.3px;letter-spacing:-0.25px;font-weight:bold;">External clock</span>
<span class="t" style="left:660.7px;top:149.3px;letter-spacing:-0.282px;color:#2020a2;">Disabled</span>
<span class="t" style="left:479px;top:165.1px;letter-spacing:-0.181px;font-weight:bold;">Output clock</span>
<span class="t" style="left:495.7px;top:180.8px;letter-spacing:-0.736px;font-weight:bold;">ECLK clock</span>
<span class="t" style="left:660.7px;top:180.8px;letter-spacing:-0.282px;color:#2020a2;">Disabled</span>
<span class="t" style="left:479px;top:196.6px;letter-spacing:-0.149px;font-weight:bold;">Low power external oscillator</span>
<span class="t" style="left:660.7px;top:196.6px;letter-spacing:-0.282px;color:#2020a2;">Disabled</span>
<span class="t" style="left:462.7px;top:212.3px;letter-spacing:-0.16px;font-weight:bold;">Operating mode settings</span>
<span class="t" style="left:479px;top:228.1px;letter-spacing:0.011px;">Boot operating mode</span>
<span class="t" style="left:660.7px;top:228.1px;letter-spacing:-0.235px;color:#2020a2;">Special Single Chip</span>
<span class="t" style="left:462.7px;top:243.9px;letter-spacing:-0.08px;font-weight:bold;">Interrupts initialization</span>
<span class="t" style="left:479px;top:259.6px;letter-spacing:0.074px;">Initialization priority</span>
<span class="t" style="left:660.7px;top:259.6px;letter-spacing:-0.042px;color:#2020a2;">interrupts enabled</span>
<span class="t" style="left:462.7px;top:275.4px;letter-spacing:-0.399px;font-weight:bold;">Enabled speed modes</span>
<span class="t" style="left:479px;top:291.1px;letter-spacing:-0.214px;font-weight:bold;">High speed mode</span>
<span class="t" style="left:660.7px;top:291.1px;letter-spacing:-0.364px;color:#8a8a8a;">Enabled</span>
<span class="t" style="left:495.7px;top:306.9px;letter-spacing:-0.086px;">High speed clock</span>
<span class="t" style="left:660.7px;top:306.9px;letter-spacing:-0.065px;color:#2020a2;">Internal Clock</span>
<span class="t" style="left:836px;top:306.9px;letter-spacing:-0.198px;">64 MHz</span>
<span class="t" style="left:495.7px;top:322.6px;letter-spacing:-0.079px;">Internal bus clock</span>
<span class="t" style="left:660.7px;top:322.6px;letter-spacing:-0.709px;color:#000;">32.0</span>
<span class="t" style="left:836px;top:322.6px;letter-spacing:-0.198px;">32 MHz</span>
<span class="t" style="left:495.7px;top:338.4px;letter-spacing:-0.647px;font-weight:bold;">PLL clock</span>
<span class="t" style="left:660.7px;top:338.4px;letter-spacing:-0.364px;color:#2020a2;">Enabled</span>
<span class="t" style="left:512.7px;top:354.1px;letter-spacing:-0.038px;">VCO clock frequency [MHz]</span>
<span class="t" style="left:660.7px;top:354.1px;letter-spacing:-0.844px;color:#8c8c46;">64</span>
<span class="t" style="left:512.7px;top:369.9px;letter-spacing:0.005px;">Frequency Modulation</span>
<span class="t" style="left:660.7px;top:369.9px;letter-spacing:0.073px;color:#2020a2;">FM off</span>
<span class="t" style="left:435px;top:455.1px;letter-spacing:0.01px;color:#8c8c8c;">main.c</span>
<span class="t" style="left:509px;top:455.1px;letter-spacing:0.143px;color:#8c8c8c;">stdint.h</span>
<span class="t" style="left:587px;top:455.1px;letter-spacing:0.234px;color:#8c8c8c;">cstdint</span>
<span class="t" style="left:663px;top:455.1px;letter-spacing:-0.253px;color:#8c8c8c;">ansi_parms.h</span>
<span class="t" style="left:766px;top:455.1px;letter-spacing:0.01px;color:#14142c;-webkit-text-stroke:.4px;">main.c</span>
</body></html>
